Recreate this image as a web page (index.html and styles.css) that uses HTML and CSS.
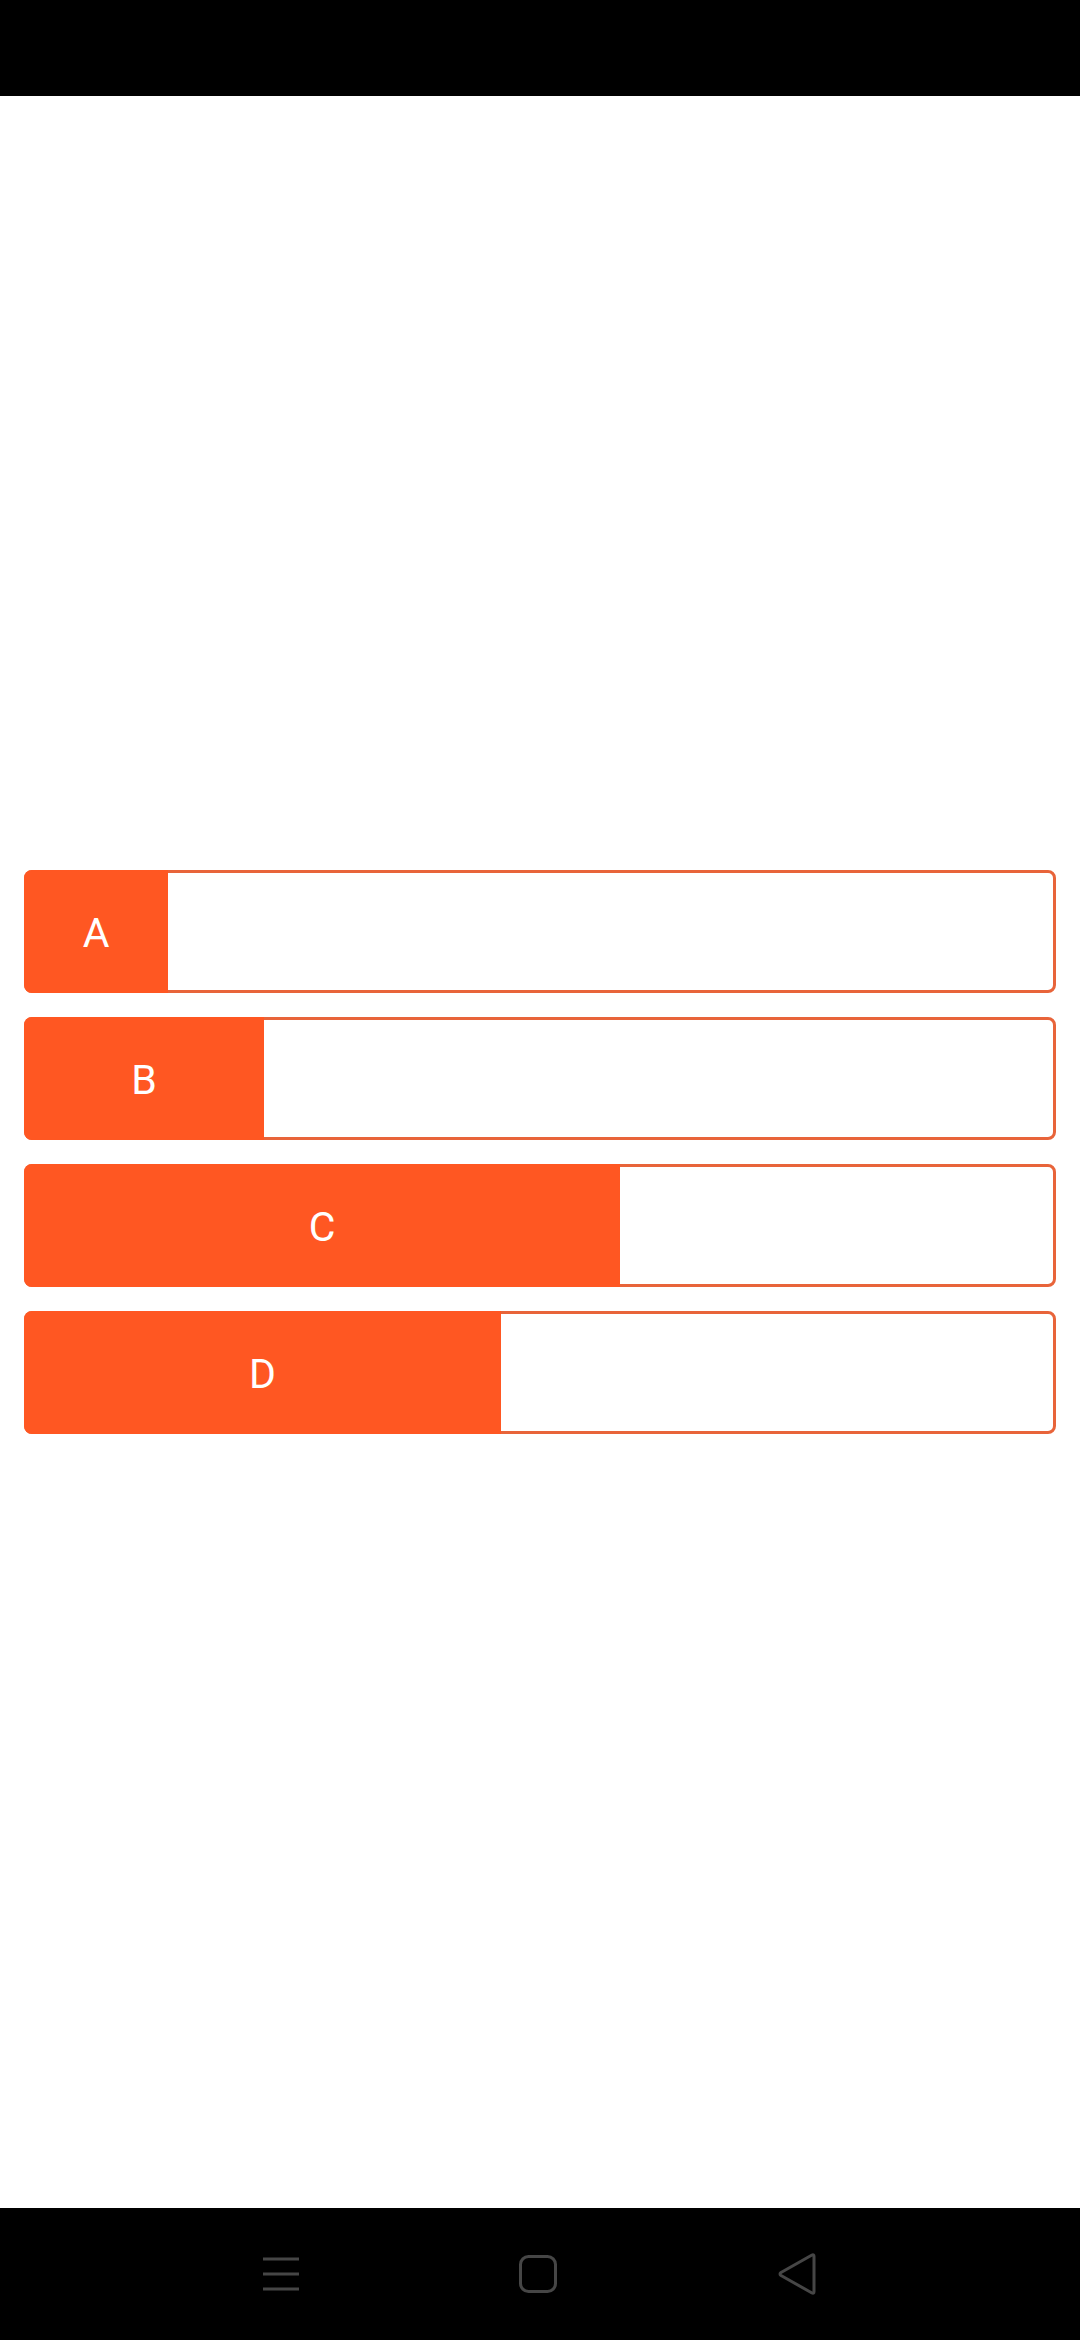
FILE: index.html
```html
<!DOCTYPE html>
<html lang="en">
<head>
    <meta charset="UTF-8">
    <meta name="viewport" content="width=device-width, initial-scale=1.0">
    <title>Poll</title>
    <link rel="stylesheet" href="styles.css">
</head>
<body>

    <div class="status-bar"></div>

    <div class="content">
        <div class="bar">
            <div class="fill" style="width: 144px;">A</div>
        </div>
        <div class="bar">
            <div class="fill" style="width: 240px;">B</div>
        </div>
        <div class="bar">
            <div class="fill" style="width: 596px;">C</div>
        </div>
        <div class="bar">
            <div class="fill" style="width: 477px;">D</div>
        </div>
    </div>

    <div class="nav-bar">
        <svg class="nav-icon" width="36" height="34" viewBox="0 0 36 34">
            <path d="M0 2H36M0 17H36M0 32H36" stroke="#464646" stroke-width="3" fill="none"/>
        </svg>
        <svg class="nav-icon" width="38" height="38" viewBox="0 0 38 38">
            <rect x="1.5" y="1.5" width="35" height="35" rx="8" stroke="#464646" stroke-width="3" fill="none"/>
        </svg>
        <svg class="nav-icon" width="40" height="44" viewBox="0 0 40 44">
            <path d="M35 3 L4 20.5 Q2 22 4 23.5 L35 41 Q37 42 37 39.5 V4.5 Q37 2 35 3 Z" stroke="#464646" stroke-width="3" stroke-linejoin="round" fill="none"/>
        </svg>
    </div>

</body>
</html>
```

FILE: styles.css
```css
body {
    margin: 0;
    padding: 0;
    font-family: Roboto, "Noto Sans", sans-serif;
    background-color: #FFFFFF;
    height: 2340px;
    display: flex;
    flex-direction: column;
}

.status-bar {
    height: 96px;
    background-color: #000000;
}

.content {
    flex: 1;
    display: flex;
    flex-direction: column;
    justify-content: center;
    gap: 24px;
    padding: 0 24px;
}

.bar {
    display: flex;
    height: 123px;
    box-sizing: border-box;
    border: 3px solid #E8643A;
    border-radius: 8px;
    background-color: #FFFFFF;
}

.fill {
    margin: -3px 0 -3px -3px;
    padding-top: 3px;
    box-sizing: border-box;
    border-radius: 8px 0 0 8px;
    background-color: #FF5722;
    color: #FFFFFF;
    font-size: 41px;
    display: flex;
    align-items: center;
    justify-content: center;
}

.nav-bar {
    height: 132px;
    background-color: #000000;
    display: flex;
    align-items: center;
    justify-content: center;
    gap: 220px;
}
```
